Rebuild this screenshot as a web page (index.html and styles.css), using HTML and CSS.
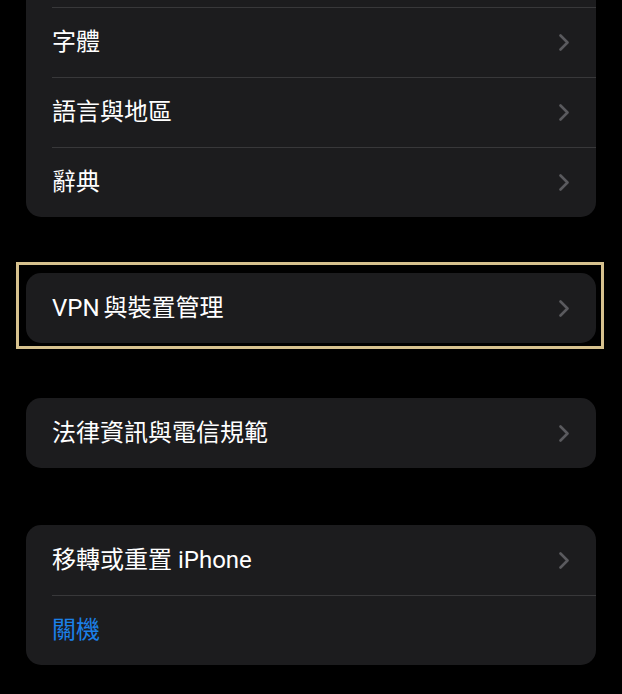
FILE: index.html
```html
<!DOCTYPE html>
<html lang="zh-Hant">
<head>
<meta charset="utf-8">
<title>一般</title>
<link rel="stylesheet" href="styles.css">
</head>
<body>
<main class="page">
  <section class="card card-first">
    <div class="row"><span class="label"></span></div>
    <div class="row"><span class="label">字體</span><svg class="chev" viewBox="0 0 10 17"><path d="M1.5 1.5 L8.5 8.5 L1.5 15.5"/></svg></div>
    <div class="row"><span class="label">語言與地區</span><svg class="chev" viewBox="0 0 10 17"><path d="M1.5 1.5 L8.5 8.5 L1.5 15.5"/></svg></div>
    <div class="row"><span class="label">辭典</span><svg class="chev" viewBox="0 0 10 17"><path d="M1.5 1.5 L8.5 8.5 L1.5 15.5"/></svg></div>
  </section>

  <div class="highlight">
    <section class="card">
      <div class="row"><span class="label"><span class="latin">VPN</span>與裝置管理</span><svg class="chev" viewBox="0 0 10 17"><path d="M1.5 1.5 L8.5 8.5 L1.5 15.5"/></svg></div>
    </section>
  </div>

  <section class="card card-after-hl">
    <div class="row"><span class="label">法律資訊與電信規範</span><svg class="chev" viewBox="0 0 10 17"><path d="M1.5 1.5 L8.5 8.5 L1.5 15.5"/></svg></div>
  </section>

  <section class="card">
    <div class="row"><span class="label">移轉或重置 iPhone</span><svg class="chev" viewBox="0 0 10 17"><path d="M1.5 1.5 L8.5 8.5 L1.5 15.5"/></svg></div>
    <div class="row"><span class="label blue">關機</span></div>
  </section>
</main>
</body>
</html>
```

FILE: styles.css
```css
* { box-sizing: border-box; }
html, body {
  margin: 0;
  padding: 0;
  background: #000;
  height: 100%;
  overflow: hidden;
}
body {
  font-family: "Roboto", "Noto Sans CJK TC", sans-serif;
  color: #fff;
}
.page {
  display: flex;
  flex-direction: column;
  padding: 0 26px;
  margin-top: -63px;
}
.card {
  background: #1c1c1e;
  border-radius: 15px;
  overflow: hidden;
}
.card + .card { margin-top: 57px; }
.card-first + .highlight { margin-top: 45px; }
.highlight + .card { margin-top: 49px; }
.highlight {
  margin: 0 -8px 0 -10px;
  border: 3px solid #d6c18e;
  padding: 8px 5px 3px 7px;
}
.row {
  height: 70px;
  display: flex;
  align-items: center;
  justify-content: space-between;
  padding-left: 26px;
  padding-right: 27px;
  position: relative;
}
.row + .row::before {
  content: "";
  position: absolute;
  top: 0;
  left: 26px;
  right: 0;
  height: 1px;
  background: #38383a;
}
.label {
  font-size: 24px;
  line-height: 1;
  letter-spacing: 0;
}
.latin { margin-right: 4px; }
.blue { color: #1b80e8; }
.chev {
  width: 10px;
  height: 17px;
  flex: none;
}
.chev path {
  fill: none;
  stroke: #5a5a5e;
  stroke-width: 2.6;
  stroke-linecap: round;
  stroke-linejoin: round;
}
```
